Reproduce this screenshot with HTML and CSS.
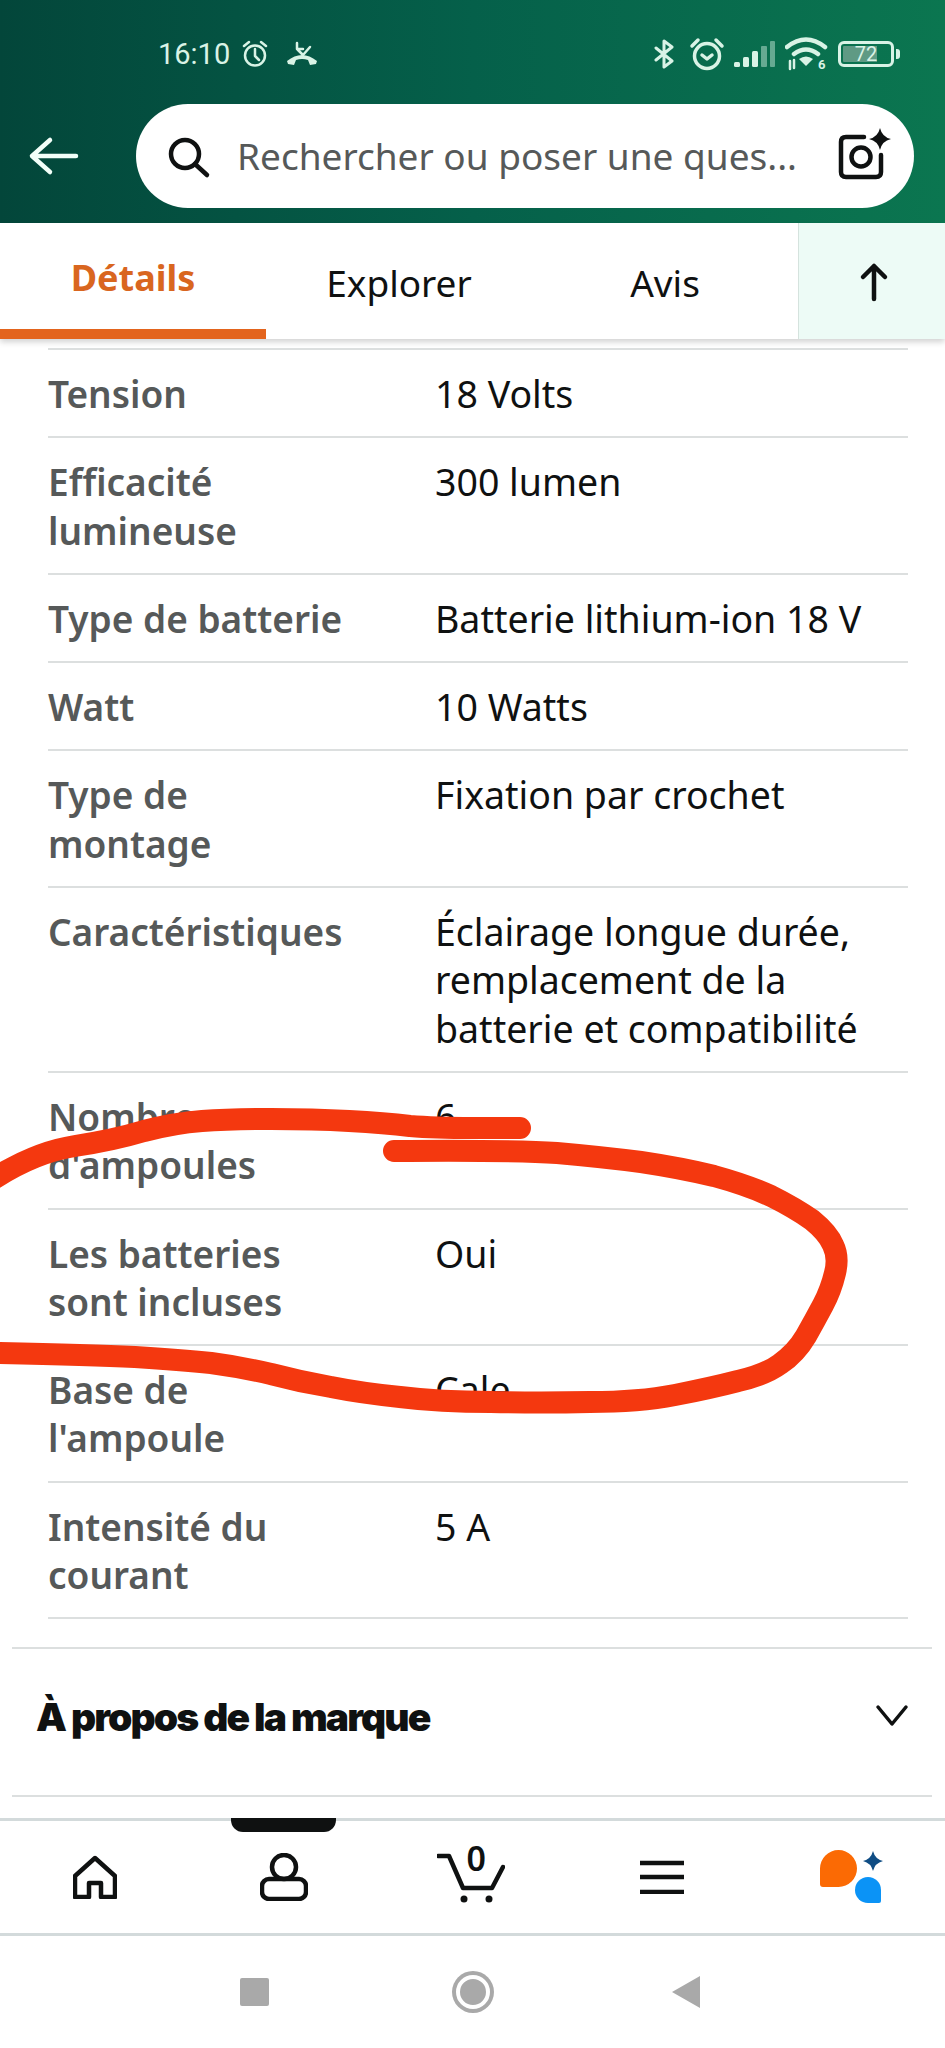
FILE: index.html
```html
<!DOCTYPE html>
<html lang="fr">
<head>
    <meta charset="UTF-8">
    <meta name="viewport" content="width=device-width, initial-scale=1.0">
    <title>Détails</title>
    <link rel="stylesheet" href="styles.css">
</head>
<body>
    <div class="page">
        <div class="header">
            <div class="status-bar">
                <div class="status-left">
                    <span class="time">16:10</span>
                    <svg class="st-icon" width="26" height="28" viewBox="0 0 26 28">
                        <circle cx="13" cy="15.5" r="10" />
                        <path d="M13 9v7l4 4M2 6l5-4M24 6l-5-4" />
                    </svg>
                    <svg class="st-icon call" width="34" height="26" viewBox="0 0 34 26">
                        <path d="M12 2v6h6M12 8l6 6 7-8" />
                        <path class="handset" d="M2 20q15-12 30 0l-1 3-6 1-2-5q-6-2-12 0l-2 5-6-1z" />
                    </svg>
                </div>
                <div class="status-right">
                    <svg class="st-icon bt" width="22" height="30" viewBox="0 0 22 30">
                        <path d="M3 9l16 13-8 6V2l8 6L3 21" />
                    </svg>
                    <svg class="st-icon thick" width="36" height="34" viewBox="0 0 36 34">
                        <circle cx="18" cy="19" r="12.500" />
                        <path d="M13 18l5 4 5-4M3 9l6-6M33 9l-6-6" />
                    </svg>
                    <svg class="signal" width="42" height="28" viewBox="0 0 42 28">
                        <rect x="0" y="22" width="6" height="5" rx="1.5" />
                        <rect x="9" y="17" width="6" height="10" rx="1.5" />
                        <rect x="18" y="11" width="6" height="16" rx="1.5" />
                        <rect class="dim" x="27" y="6" width="6" height="21" rx="1" />
                        <rect class="dim" x="36" y="1" width="5" height="26" rx="1" />
                    </svg>
                    <svg class="st-icon wifi" width="44" height="38" viewBox="0 0 44 38">
                        <path d="M2 12q19-15 38 0M9 19q12-9 24 0" />
                        <path class="wedge" d="M14 24q7-5 14 0l-7 7z" />
                        <path class="arrows" d="M5 26v8M9 25v8" />
                        <text x="33" y="34">6</text>
                    </svg>
                    <div class="battery"><span>72</span></div>
                </div>
            </div>
            <div class="search-row">
                <svg class="back" width="56" height="42" viewBox="0 0 56 42">
                    <path d="M6 21h44M24 5L6 21l18 16" />
                </svg>
                <div class="search-box">
                    <svg class="ico" width="48" height="48" viewBox="0 0 48 48">
                        <circle cx="20" cy="22" r="14" />
                        <path d="M30 32l12 11" />
                    </svg>
                    <span class="search-text">Rechercher ou poser une ques...</span>
                    <svg class="ico camera" width="56" height="56" viewBox="0 0 56 56">
                        <path d="M28 9H10q-5 0-5 5v30q0 5 5 5h30q5 0 5-5V27" />
                        <circle cx="25" cy="29" r="9.5" />
                        <path class="solid" d="M44 0q2 9 11 11-9 2-11 11-2-9-11-11 9-2 11-11z" />
                    </svg>
                </div>
            </div>
        </div>

        <div class="tabs">
            <div class="tab active">Détails</div>
            <div class="tab">Explorer</div>
            <div class="tab">Avis</div>
            <div class="tab-up">
                <svg class="ico" width="30" height="40" viewBox="0 0 30 40">
                    <path d="M15 37V4M4 15L15 4l11 11" />
                </svg>
            </div>
        </div>

        <div class="specs">
            <div class="spec-row"><div class="spec-label">Tension</div><div class="spec-value">18 Volts</div></div>
            <div class="spec-row"><div class="spec-label">Efficacité lumineuse</div><div class="spec-value">300 lumen</div></div>
            <div class="spec-row"><div class="spec-label">Type de batterie</div><div class="spec-value">Batterie lithium-ion 18 V</div></div>
            <div class="spec-row"><div class="spec-label">Watt</div><div class="spec-value">10 Watts</div></div>
            <div class="spec-row"><div class="spec-label">Type de montage</div><div class="spec-value">Fixation par crochet</div></div>
            <div class="spec-row"><div class="spec-label">Caractéristiques</div><div class="spec-value">Éclairage longue durée, remplacement de la batterie et compatibilité</div></div>
            <div class="spec-row"><div class="spec-label">Nombre d'ampoules</div><div class="spec-value">6</div></div>
            <div class="spec-row"><div class="spec-label">Les batteries sont incluses</div><div class="spec-value">Oui</div></div>
            <div class="spec-row"><div class="spec-label">Base de l'ampoule</div><div class="spec-value">Cale</div></div>
            <div class="spec-row"><div class="spec-label">Intensité du courant</div><div class="spec-value">5 A</div></div>
        </div>

        <div class="brand">
            <span class="brand-title">À propos de la marque</span>
            <svg class="ico chevron" width="34" height="24" viewBox="0 0 34 24">
                <path d="M3 3l14 17L31 3" />
            </svg>
        </div>

        <div class="bottom-nav">
            <div class="nav-item">
                <svg class="ico" width="44" height="44" viewBox="0 0 44 44">
                    <path d="M22 3l20 18v21H28V28H16v14H2V21z" />
                </svg>
            </div>
            <div class="nav-item current">
                <svg class="ico" width="48" height="48" viewBox="0 0 48 48">
                    <circle cx="24" cy="14" r="12" />
                    <rect x="2" y="26" width="44" height="20" rx="7" />
                </svg>
            </div>
            <div class="nav-item">
                <div class="cart">
                    <svg class="ico" width="68" height="56" viewBox="0 0 68 56">
                        <path d="M1 7h11l14 32h29l11-21" />
                        <circle class="solid" cx="27" cy="50" r="3.5" />
                        <circle class="solid" cx="52" cy="50" r="3.5" />
                    </svg>
                    <span class="cart-count">0</span>
                </div>
            </div>
            <div class="nav-item">
                <svg class="ico" width="44" height="34" viewBox="0 0 44 34">
                    <path d="M0 3h44M0 17h44M0 32h44" />
                </svg>
            </div>
            <div class="nav-item">
                <svg width="68" height="58" viewBox="0 0 68 58">
                    <path fill="#fb6a04" d="M3 20.500a18.500 18.500 0 1 1 18.500 18.500H6q-3 0-3-3z" />
                    <path fill="#0b93f6" d="M38 42a13 13 0 1 1 26 0v11q0 2-2 2H51a13 13 0 0 1-13-13z" />
                    <path fill="#0f4d84" d="M56 3q2 8 10 10-8 2-10 10-2-8-10-10 8-2 10-10z" />
                </svg>
            </div>
        </div>

        <div class="system-nav">
            <div class="sys-square"></div>
            <div class="sys-circle"></div>
            <div class="sys-back"></div>
        </div>

        <!-- hand drawn marker on top of the screenshot -->
        <svg class="scribble" width="945" height="2048" viewBox="0 0 945 2048">
            <path d="M-5 1178Q36 1152 75 1146Q114 1140 144 1131Q175 1123 202 1121Q229 1119 271 1119Q313 1119 349 1121Q385 1123 410 1126Q434 1128 473 1128L520 1128" />
            <path d="M394 1151Q512 1150 557 1153Q602 1157 641 1162Q681 1168 714 1176Q747 1185 771 1196Q795 1208 812 1220Q828 1233 833 1245Q839 1257 835 1273Q831 1290 823 1305Q815 1320 806 1336Q796 1353 780 1364Q765 1375 738 1381Q711 1388 675 1395Q639 1402 590 1402Q542 1403 491 1402Q440 1402 400 1397Q361 1393 331 1387Q301 1382 271 1374Q241 1367 211 1363Q181 1360 135 1357Q90 1355 -5 1353" />
        </svg>
    </div>
</body>
</html>
```

FILE: styles.css
```css
body {
    margin: 0;
    background-color: #ffffff;
    font-family: "Noto Sans", Arial, sans-serif;
    color: #0f1111;
}
.page {
    position: relative;
    width: 945px;
    height: 2048px;
    overflow: hidden;
    display: flex;
    flex-direction: column;
}
.header {
    height: 223px;
    background: linear-gradient(90deg, #03463a 0%, #05604a 50%, #0b7650 100%);
}
.status-bar {
    height: 98px;
    padding: 10px 46px 0 158px;
    box-sizing: border-box;
    display: flex;
    justify-content: space-between;
    align-items: center;
    color: #d9f3e6;
}
.status-left, .status-right {
    display: flex;
    align-items: center;
}
.status-left {
    gap: 10px;
}
.status-right {
    gap: 9px;
}
.time {
    font-family: Roboto, Arial, sans-serif;
    font-size: 29px;
    margin-right: 2px;
}
.st-icon {
    fill: none;
    stroke: #d9f3e6;
    stroke-width: 2.500;
    stroke-linecap: round;
    stroke-linejoin: round;
}
.st-icon.thick {
    stroke-width: 3.500;
}
.st-icon.bt {
    stroke-width: 3;
    margin-right: 5px;
}
.st-icon.call {
    margin-left: 7px;
}
.st-icon .handset {
    fill: #d9f3e6;
    stroke: none;
}
.st-icon.wifi path {
    stroke-width: 4.500;
}
.st-icon.wifi .wedge {
    fill: #d9f3e6;
    stroke: none;
}
.st-icon.wifi .arrows {
    stroke-width: 2.500;
}
.st-icon.wifi text {
    font-family: Roboto, Arial, sans-serif;
    font-size: 13px;
    font-weight: bold;
    fill: #d9f3e6;
    stroke: none;
}
.signal rect {
    fill: #d9f3e6;
}
.signal rect.dim {
    opacity: 0.45;
}
.battery {
    position: relative;
    width: 56px;
    height: 26px;
    margin-right: 5px;
    box-sizing: border-box;
    border: 3px solid #d9f3e6;
    border-radius: 6px;
    background: linear-gradient(90deg, #5f9a84 0%, #5f9a84 72%, transparent 72%);
    background-clip: content-box;
    padding: 2px;
    display: flex;
    align-items: center;
    justify-content: center;
    font-family: Roboto, Arial, sans-serif;
    font-size: 20px;
}
.battery::after {
    content: "";
    position: absolute;
    right: -9px;
    top: 5px;
    width: 4px;
    height: 10px;
    border-radius: 0 3px 3px 0;
    background-color: #d9f3e6;
}
.search-row {
    display: flex;
    align-items: center;
    padding: 6px 31px 0 26px;
}
.back {
    margin-right: 54px;
    fill: none;
    stroke: #f2fff9;
    stroke-width: 4.500;
    stroke-linecap: round;
    stroke-linejoin: round;
}
.search-box {
    flex: 1;
    height: 104px;
    padding: 0 22px 0 29px;
    box-sizing: border-box;
    background-color: #ffffff;
    border-radius: 52px;
    display: flex;
    align-items: center;
}
.search-text {
    flex: 1;
    margin: 0 0 2px 24px;
    font-size: 37px;
    color: #565959;
    white-space: nowrap;
}
.ico {
    fill: none;
    stroke: #0f1111;
    stroke-width: 4.500;
    stroke-linecap: round;
    stroke-linejoin: round;
    flex-shrink: 0;
}
.ico .solid {
    fill: #0f1111;
    stroke: none;
}
.tabs {
    position: relative;
    display: flex;
    height: 116px;
    background-color: #ffffff;
    box-shadow: 0 3px 6px rgba(0, 0, 0, 0.18);
}
.tab {
    width: 266px;
    padding-top: 2px;
    box-sizing: border-box;
    display: flex;
    align-items: center;
    justify-content: center;
    font-size: 37px;
}
.tab.active {
    border-bottom: 10px solid #e3641d;
    color: #d9661f;
    font-size: 36px;
    font-weight: bold;
}
.tab-up {
    flex: 1;
    padding: 2px 0 0 4px;
    display: flex;
    align-items: center;
    justify-content: center;
    border-left: 1px solid #d5e3de;
    background-color: #edfbf6;
}
.specs {
    margin: 9px 37px 0 48px;
    border-top: 2px solid #dcdfdf;
}
.spec-row {
    display: grid;
    grid-template-columns: 387px 1fr;
    padding: 20px 0 18px;
    border-bottom: 2px solid #dcdfdf;
    font-size: 37.5px;
    line-height: 48.3px;
}
.spec-label {
    padding-right: 87px;
    font-size: 37px;
    font-weight: 600;
    color: #565959;
}
.brand {
    height: 150px;
    margin: 28px 13px 0 12px;
    padding: 0 23px 12px 24px;
    border-top: 2px solid #dcdfdf;
    border-bottom: 2px solid #dcdfdf;
    box-sizing: border-box;
    display: flex;
    align-items: center;
    justify-content: space-between;
}
.brand-title {
    font-family: Inter, Arial, sans-serif;
    font-size: 39px;
    font-weight: 900;
    letter-spacing: -1.900px;
}
.chevron {
    margin-bottom: 0;
    stroke-width: 3.500;
}
.bottom-nav {
    height: 118px;
    margin-top: 21px;
    display: grid;
    grid-template-columns: repeat(5, 1fr);
    border-top: 3px solid #d3dadb;
    border-bottom: 3px solid #d3dadb;
    box-sizing: border-box;
}
.nav-item {
    position: relative;
    display: flex;
    align-items: center;
    justify-content: center;
}
.nav-item.current::before {
    content: "";
    position: absolute;
    top: -3px;
    left: 42px;
    width: 105px;
    height: 14px;
    border-radius: 0 0 12px 12px;
    background-color: #0f1111;
}
.cart {
    position: relative;
    display: flex;
    margin-right: 4px;
}
.cart-count {
    position: absolute;
    top: -14px;
    left: 30px;
    font-size: 34px;
    font-weight: 600;
}
.system-nav {
    flex: 1;
    display: grid;
    grid-template-columns: 240px 29px 187px 34px 182px 28px;
    align-items: center;
}
.sys-square {
    grid-column: 2;
    width: 29px;
    height: 28px;
    border-radius: 2px;
    background-color: #a9a9a9;
}
.sys-circle {
    grid-column: 4;
    width: 26px;
    height: 26px;
    border: 4px solid #ffffff;
    border-radius: 50%;
    background-color: #a9a9a9;
    box-shadow: 0 0 0 4px #a9a9a9;
}
.sys-back {
    grid-column: 6;
    width: 0;
    height: 0;
    border-top: 16px solid transparent;
    border-bottom: 16px solid transparent;
    border-right: 28px solid #a9a9a9;
}
.scribble {
    position: absolute;
    top: 0;
    left: 0;
    fill: none;
    stroke: #f4380f;
    stroke-width: 22;
    stroke-linecap: round;
    stroke-linejoin: round;
}
```
